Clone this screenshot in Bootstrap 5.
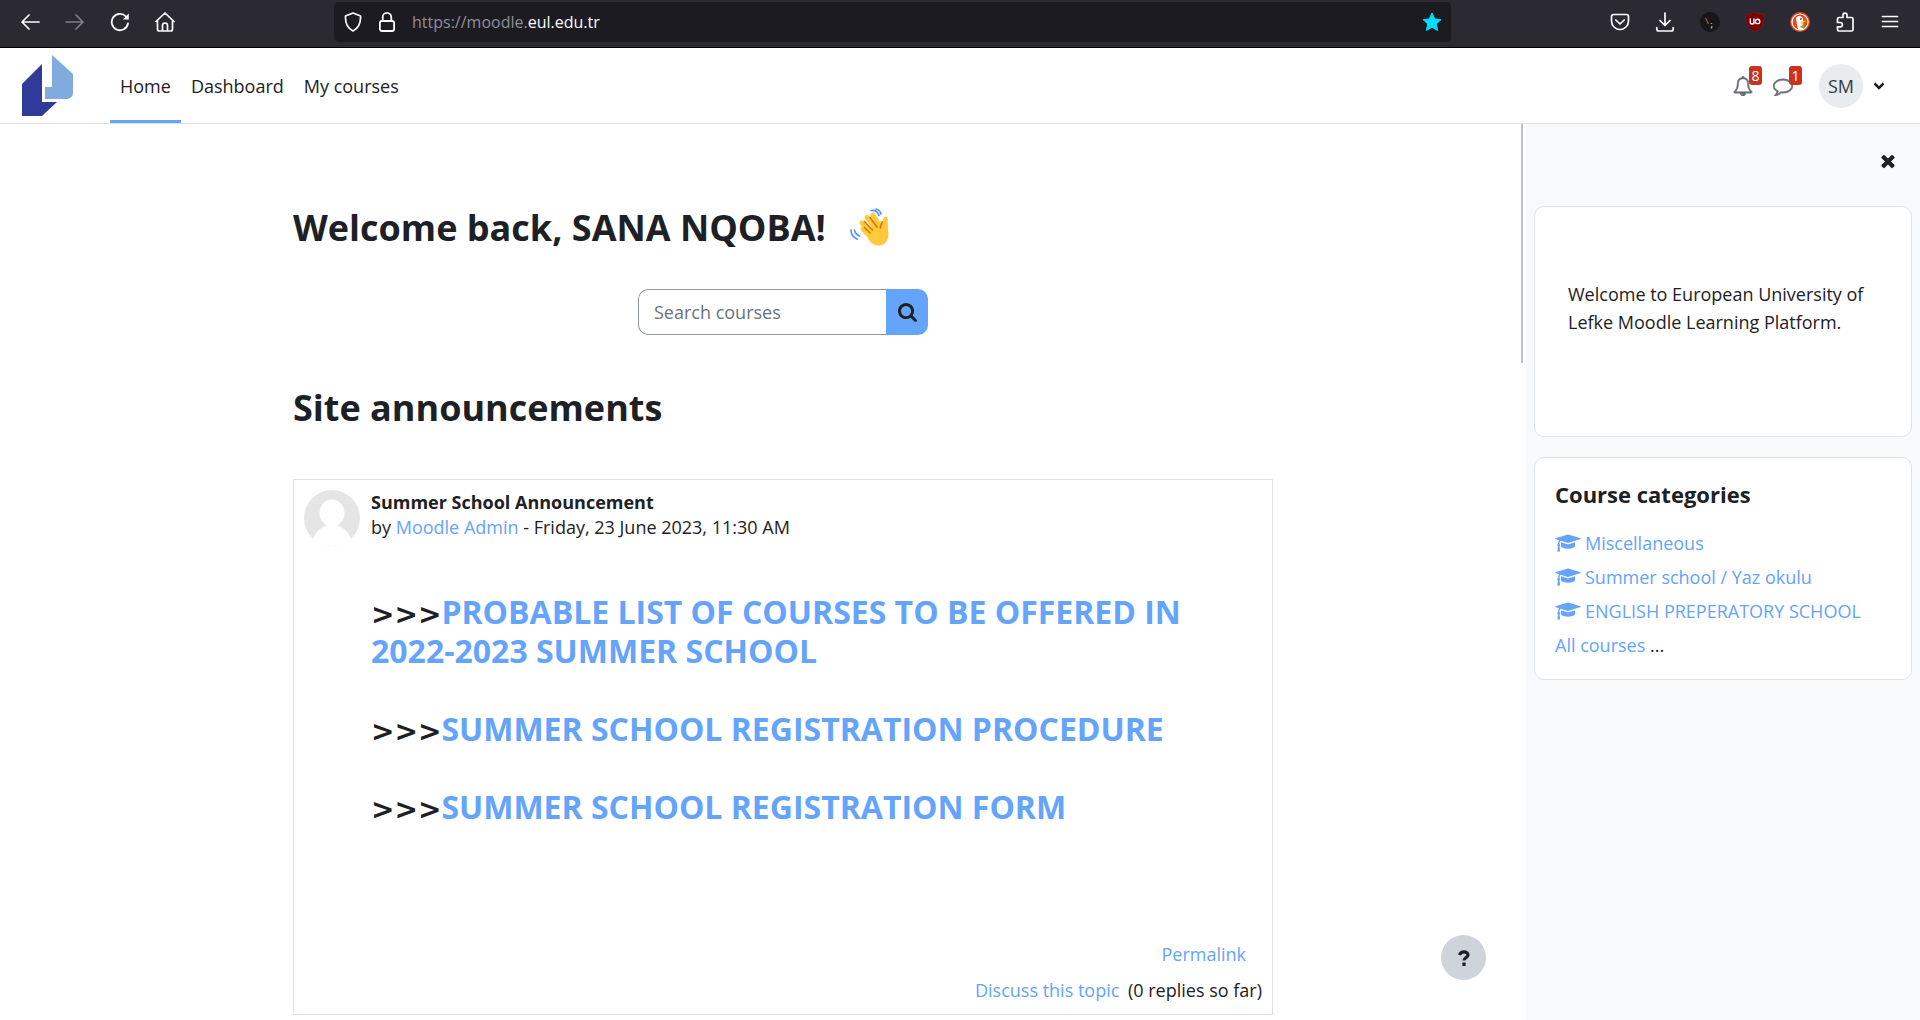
<!DOCTYPE html>
<html lang="en">
<head>
<meta charset="utf-8">
<meta name="viewport" content="width=device-width, initial-scale=1">
<title>Home | EUL Moodle</title>
<link href="https://cdn.jsdelivr.net/npm/bootstrap@5.3.0/dist/css/bootstrap.min.css" rel="stylesheet">
<style>
:root{--accent:#64a4fb;--ink:#1d2125;--line:#dee2e6}
body{font-family:"Open Sans","Noto Sans",sans-serif;font-size:18px;line-height:28px;color:var(--ink);background:#fff}
a{color:var(--accent);text-decoration:none}
a:hover{text-decoration:underline}
svg{display:block;flex:none}
h1,h2,h3,h4{font-weight:700;margin:0}
.browser-bar{height:48px;background:#2b2a33;border-bottom:1px solid #000;padding:2px 20px 5px;color:#fbfbfe}
.browser-bar button{background:none;border:0;padding:0;width:20px;height:20px;color:inherit;display:block}
.side-tools{gap:25px}
.left-tools{width:314px;flex:none}
.btn-off{opacity:.4}
.address{flex:0 1 1117px;height:40px;background:#1c1b22;border-radius:5px;padding:0 9px 0 10px}
.url-dim{color:#8f8f9a}
.url-text{font-size:16px;line-height:24px}
.browser-bar .star-btn{color:#00ddff}
.site-nav{height:76px;border-bottom:1px solid var(--line);padding:0 35px 0 20px}
.site-nav .nav-link{color:var(--ink);padding:0 10px;display:flex;align-items:center}
.site-nav .nav-link.active{box-shadow:inset 0 -3px var(--accent)}
.nav-gap{margin-left:35px}
.nav-tools{gap:20px}
.tool-btn{background:none;border:0;padding:0;color:#6a6f75;position:relative}
.tool-btn svg{stroke:currentColor;stroke-width:50}
.count{position:absolute;top:-10px;left:16px;width:13px;height:19px;border-radius:3px;background:#ca3120;color:#fff;font-size:14px;line-height:19px;text-align:center}
.user-btn{background:none;border:0;padding:0;gap:10px;margin-left:6px}
.initials{width:44px;height:44px;border-radius:50%;background:#e9ecef;color:#343a40;line-height:44px;font-size:18px}
.main-pane{min-width:0;position:relative}
.thumb{position:absolute;right:3px;top:0;width:2px;height:239px;background:#bfc4c9}
.content-col{width:100%;max-width:980px;margin-left:293px;margin-right:24px;padding-top:80px}
.page-title{font-size:36px;line-height:48px}
.hello{gap:24px}
.course-search{width:290px;margin:37px auto 0;height:46px}
.course-search .form-control{border:1px solid #8f959e;border-radius:10px 0 0 10px;font-size:18px;padding:0 15px;border-right:0}
.course-search .form-control::placeholder{color:#6a737b}
.course-search .btn{background:var(--accent);border:0;border-radius:0 10px 10px 0;width:42px;padding:0;color:var(--ink)}
.section-title{margin-top:49px}
.post{border:1px solid var(--line);margin-top:47px;padding:10px}
.post-head{line-height:25px}
.post-head svg{margin-right:11px}
.post-subject{font-size:18px;line-height:25px}
.post-body{padding-left:67px;margin-top:46px}
.post-body h3{font-size:32px;line-height:39px;margin-bottom:39px}
.arrows{font-family:"DejaVu Sans",sans-serif;font-size:28px;line-height:28px}
.post-actions{margin-top:114px}
.help-btn{position:absolute;right:40px;bottom:40px;width:45px;height:45px;border-radius:50%;border:0;background:#ced4da;padding:0;color:var(--ink)}
.drawer{width:394px;flex:none;background:#f8f9fa;padding:0 8px}
.drawer-head{height:82px;padding:0 16px}
.drawer-head button{background:none;border:0;padding:0;color:var(--ink);margin-top:-6px}
.block{border:1px solid var(--line);border-radius:10px;background:#fff;margin-bottom:20px}
.welcome-block{padding:73px 33px 100px}
.welcome-block p{margin:0}
.cat-block{padding:20px 20px 17px}
.cat-block h2{font-size:22px;line-height:32px;margin-bottom:16px}
.cat-block li,.all-line{line-height:34px}
.cat-block li a{display:flex;align-items:center;gap:4px}
</style>
<script src="https://cdn.jsdelivr.net/npm/bootstrap@5.3.0/dist/js/bootstrap.bundle.min.js"></script>
</head>
<body>
<div class="d-flex flex-column vh-100 overflow-hidden">

<div class="browser-bar d-flex flex-shrink-0">
  <div class="side-tools left-tools d-flex align-items-center">
    <button aria-label="Back"><svg width="20" height="20" viewBox="0 0 20 20" fill="none" stroke="currentColor" stroke-width="1.7" stroke-linecap="round" stroke-linejoin="round"><path d="M19 10H2M9 3L2 10l7 7"/></svg></button>
    <button class="btn-off" aria-label="Forward"><svg width="20" height="20" viewBox="0 0 20 20" fill="none" stroke="currentColor" stroke-width="1.7" stroke-linecap="round" stroke-linejoin="round"><path d="M1 10h17M11 3l7 7-7 7"/></svg></button>
    <button aria-label="Reload"><svg width="20" height="20" viewBox="0 0 20 20" fill="none" stroke="currentColor" stroke-width="1.8" stroke-linecap="round"><path d="M18 11.500A8.200 8.200 0 1 1 16 4.500"/><path d="M18.800 1.500v6h-6z" fill="currentColor" stroke="none"/></svg></button>
    <button aria-label="Home page"><svg width="20" height="20" viewBox="0 0 20 20" fill="none" stroke="currentColor" stroke-width="1.700" stroke-linejoin="round" stroke-linecap="round"><path d="M1 9.500L10 1l9 8.500M2.500 8.500V17a2 2 0 0 0 2 2h11a2 2 0 0 0 2-2V8.500M7.500 18.500v-5a2.500 2.500 0 0 1 5 0v5"/></svg></button>
  </div>
  <div class="address d-flex align-items-center">
    <svg width="18" height="20" viewBox="0 0 18 20" fill="none" stroke="currentColor" stroke-width="1.700" stroke-linejoin="round"><path d="M9 1l7.500 3c.4 7-1.500 12-7.500 15C3 16 1.100 11 1.500 4z"/></svg>
    <svg class="ms-3" width="18" height="20" viewBox="0 0 18 20" fill="none" stroke="currentColor" stroke-width="1.800"><rect x="1.900" y="9" width="14.200" height="10" rx="2"/><path d="M4.700 9V5.200a4.300 4.300 0 0 1 8.600 0V9"/></svg>
    <span class="url-text flex-grow-1 ms-3"><span class="url-dim">https://moodle.</span>eul.edu.tr</span>
    <button class="star-btn" aria-label="Bookmark"><svg width="20" height="20" viewBox="0 0 20 20" fill="currentColor" stroke="currentColor" stroke-linejoin="round"><path d="M10 1l2.700 5.900 6.300.7-4.700 4.300 1.300 6.600L10 15.200l-5.600 3.300 1.300-6.600L1 7.600l6.300-.7z"/></svg></button>
  </div>
  <div class="side-tools d-flex flex-grow-1 align-items-center justify-content-end">
    <button aria-label="Pocket"><svg width="20" height="20" viewBox="0 0 20 20" fill="none" stroke="currentColor" stroke-width="1.700" stroke-linecap="round" stroke-linejoin="round"><path d="M3.500 2.500h13a2 2 0 0 1 2 2V9a8.500 8.500 0 0 1-17 0V4.500a2 2 0 0 1 2-2zM5.800 8l4.200 4 4.200-4"/></svg></button>
    <button aria-label="Downloads"><svg width="20" height="20" viewBox="0 0 20 20" fill="none" stroke="currentColor" stroke-width="1.700" stroke-linecap="round" stroke-linejoin="round"><path d="M10 1v12M5 8.500l5 5 5-5M1.800 15.500V17a2 2 0 0 0 2 2h12.400a2 2 0 0 0 2-2v-1.500"/></svg></button>
    <button aria-label="Extension"><svg width="20" height="20" viewBox="0 0 20 20"><circle cx="10" cy="10" r="10" fill="#17171a"/><path d="M5.500 6l3 6" stroke="#a0563c" stroke-width="1.200"/><path d="M11.500 11v1M12 14l-.8 2.500" stroke="#998" stroke-width="1.500"/></svg></button>
    <button aria-label="uBlock"><svg width="20" height="20" viewBox="0 0 20 20"><path d="M10 0c3 1.800 5.500 2.300 9 2.500 0 8.500-.5 13-9 17.500C1.500 15.500 1 11 1 2.500 4.500 2.300 7 1.800 10 0z" fill="#800000" stroke="#603038" stroke-width=".5"/><path d="M5.300 6.500v3.700a1.700 1.700 0 0 0 3.600 0V6.500M8.900 6.500v5.700" fill="none" stroke="#fff" stroke-width="1.400"/><circle cx="12.600" cy="9.400" r="2.200" fill="none" stroke="#fff" stroke-width="1.400"/></svg></button>
    <button aria-label="DuckDuckGo"><svg width="20" height="20" viewBox="0 0 20 20"><circle cx="10" cy="10" r="10" fill="#e8481c"/><circle cx="10" cy="10" r="8" fill="none" stroke="#fff" stroke-width="1.200"/><path d="M8 17.500L6.200 8C5.700 5 8 3.500 10.500 4.300c2.500.8 3.200 3.400 2.500 6.200l-.6 3 1 4c-2 .6-4 .5-5.400 0z" fill="#fff"/><path d="M11 9.500c2-.8 4-1 5-.4-1 1.200-3 1.400-4.500 2.200 1.200.4 2.600.2 3 .8-1.200.8-3.500.8-4-.6z" fill="#fdd20a"/><path d="M10.500 14l4-1v3.600l-4-1z" fill="#65bc46"/><circle cx="10.800" cy="7" r=".9" fill="#2d4f8e"/></svg></button>
    <button aria-label="Extensions"><svg width="20" height="20" viewBox="0 0 20 20" fill="none" stroke="currentColor" stroke-width="1.700" stroke-linejoin="round"><path d="M2.500 10V7a1.500 1.500 0 0 1 1.500-1.500h4V3.200a2 2 0 0 1 4 0v2.300h4.500A1.500 1.500 0 0 1 18 7v10.500a1.500 1.500 0 0 1-1.500 1.500H4a1.500 1.500 0 0 1-1.500-1.500v-2.700h2.700a2.100 2.100 0 0 0 0-4.300H2.500z"/></svg></button>
    <button aria-label="Menu"><svg width="20" height="20" viewBox="0 0 20 20" stroke="currentColor" stroke-width="1.700" stroke-linecap="round"><path d="M2.500 4.500h15M2.500 9.500h15M2.500 14.500h15"/></svg></button>
  </div>
</div>

<nav class="site-nav d-flex flex-shrink-0 align-items-stretch" aria-label="Site navigation">
  <a href="#" class="d-flex align-items-center" aria-label="European University of Lefke"><svg width="55" height="62" viewBox="0 0 55 62"><path d="M2 29L22 9v38h15L22 61H2z" fill="#2f3a9b"/><path d="M32 0l21 19v19c0 3.500-3 6-6.500 6H25V32h7z" fill="#80abdf"/></svg></a>
  <ul class="nav nav-gap flex-nowrap">
    <li class="d-flex"><a class="nav-link active" aria-current="page" href="#">Home</a></li>
    <li class="d-flex"><a class="nav-link" href="#">Dashboard</a></li>
    <li class="d-flex"><a class="nav-link" href="#">My courses</a></li>
  </ul>
  <div class="nav-tools ms-auto d-flex align-items-center">
    <button class="tool-btn" aria-label="Notifications"><svg width="20" height="20" viewBox="0 0 1792 1792" fill="currentColor"><path d="M912 1696q0-16-16-16-59 0-101.500-42.500t-42.500-101.500q0-16-16-16t-16 16q0 73 51.500 124.500t124.500 51.500q16 0 16-16zM246 1408h1300q-266-300-266-832 0-51-24-105t-69-103-121.500-80.500-169.500-31.500-169.500 31.500-121.500 80.500-69 103-24 105q0 532-266 832zM1728 1408q0 52-38 90t-90 38h-448q0 106-75 181t-181 75-181-75-75-181h-448q-52 0-90-38t-38-90q50-42 91-88t85-119.500 74.500-158.500 50-206 19.500-260q0-152 117-282.500t307-158.500q-8-19-8-39 0-40 28-68t68-28 68 28 28 68q0 20-8 39 190 28 307 158.500t117 282.500q0 139 19.500 260t50 206 74.500 158.500 85 119.500 91 88z"/></svg><span class="count">8</span></button>
    <button class="tool-btn" aria-label="Messages"><svg width="20" height="20" viewBox="0 0 1792 1792" fill="currentColor"><path d="M896 384q-204 0-381.500 69.500t-282 187.500-104.500 255q0 112 71.500 213.500t201.500 175.500l87 50-27 96q-24 91-70 172 152-63 275-171l43-38 57 6q69 8 130 8 204 0 381.500-69.500t282-187.500 104.500-255-104.500-255-282-187.500-381.500-69.500zM1792 896q0 174-120 321.500t-326 233-450 85.500q-70 0-145-8-198 175-460 242-49 14-114 22h-5q-15 0-27-10.500t-16-27.500v-1q-3-4-.5-12t2-10 4.500-9.500l6-9 7-8.500 8-9q7-8 31-34.500t34.500-38 31-39.500 32.500-51 27-59 26-76q-157-89-247.500-220t-90.500-281q0-174 120-321.500t326-233 450-85.500 450 85.500 326 233 120 321.500z"/></svg><span class="count">1</span></button>
    <button class="user-btn d-flex align-items-center" aria-label="User menu"><span class="initials">SM</span><svg width="12" height="8" viewBox="0 0 12 8" fill="none" stroke="#1d2125" stroke-width="2.500"><path d="M1.500 1.500L6 6l4.500-4.500"/></svg></button>
  </div>
</nav>

<div class="d-flex flex-grow-1 overflow-hidden">
  <main class="main-pane flex-grow-1 d-flex overflow-hidden">
    <div class="content-col">
      <h1 class="page-title hello d-flex align-items-center"><span>Welcome back, SANA NQOBA!</span>
        <svg width="40" height="40" viewBox="0 0 40 40" role="img" aria-label="Waving hand">
          <g stroke-linecap="round" fill="none">
            <path d="M13 21L21 29M12 15L24 27M17 9.500L28 23M23 7L31 21" stroke="#ffc83d" stroke-width="5"/>
            <path d="M35.500 11v12" stroke="#ffc83d" stroke-width="4.500"/>
            <path d="M16 24L28 14l9-2 1.500 14c0 7-4 11-9 11.500-5 .5-8-2-11-6z" fill="#ffc83d"/>
            <path d="M14.500 19.500l5.500 5.500M14.500 13.500l8 8.500M20 9.500l7 9.500M32.500 14c-.5 2-2.500 3-2 6" stroke="#d67d00" stroke-width="1.700"/>
            <path d="M21 2.500q6-1 8 5M26 1q4 1 5 5M1 22q0 6 6 9M4.500 22q.5 4 5 6" stroke="#5092ff" stroke-width="1.700"/>
          </g>
        </svg>
      </h1>
      <form class="course-search input-group flex-nowrap" role="search">
        <input class="form-control" type="text" placeholder="Search courses" aria-label="Search courses">
        <button class="btn d-flex align-items-center justify-content-center" type="button" aria-label="Search"><svg width="19" height="19" viewBox="0 128 1664 1664" fill="currentColor"><path d="M1152 832q0-185-131.500-316.500t-316.500-131.500-316.500 131.500-131.500 316.500 131.500 316.500 316.500 131.500 316.500-131.500 131.500-316.500zM1664 1664q0 52-38 90t-90 38q-54 0-90-38l-343-342q-179 124-399 124-143 0-273.500-55.500t-225-150-150-225-55.500-273.500 55.500-273.500 150-225 225-150 273.500-55.500 273.500 55.500 225 150 150 225 55.500 273.500q0 220-124 399l343 343q37 37 37 90z"/></svg></button>
      </form>
      <h2 class="page-title section-title">Site announcements</h2>
      <article class="post">
        <div class="post-head d-flex">
          <svg width="56" height="56" viewBox="0 0 56 56" role="img" aria-label="Moodle Admin"><clipPath id="face"><circle cx="28" cy="28" r="28"/></clipPath><g clip-path="url(#face)"><path fill="#e5e5e5" d="M0 0h56v56H0z"/><ellipse cx="28" cy="23" rx="12.500" ry="13.500" fill="#fff"/><path d="M7 56c2-12 9-21 21-21s19 9 21 21z" fill="#fff"/></g></svg>
          <div>
            <h4 class="post-subject">Summer School Announcement</h4>
            <div>by <a href="#">Moodle Admin</a> - Friday, 23 June 2023, 11:30 AM</div>
          </div>
        </div>
        <div class="post-body">
          <h3><span class="arrows">&gt;&gt;&gt;</span><a href="#">PROBABLE LIST OF COURSES TO BE OFFERED IN 2022-2023 SUMMER SCHOOL</a></h3>
          <h3><span class="arrows">&gt;&gt;&gt;</span><a href="#">SUMMER SCHOOL REGISTRATION PROCEDURE</a></h3>
          <h3><span class="arrows">&gt;&gt;&gt;</span><a href="#">SUMMER SCHOOL REGISTRATION FORM</a></h3>
        </div>
        <div class="post-actions text-end"><a class="me-3" href="#">Permalink</a></div>
        <div class="text-end mt-2"><a class="me-1" href="#">Discuss this topic</a> (0 replies so far)</div>
      </article>
    </div>
    <div class="thumb"></div>
    <button class="help-btn d-flex align-items-center justify-content-center" aria-label="Help"><svg width="12" height="16" viewBox="0 0 12 16" fill="none" stroke="currentColor" stroke-width="3.200"><path d="M1.500 5C2.500 2.500 4 1.800 6 1.800c2.200 0 4 1.200 4 3.200C10 7.500 6 7.500 6 10.500M6 12.500V16"/></svg></button>
  </main>

  <aside class="drawer" aria-label="Blocks">
    <div class="drawer-head d-flex align-items-center justify-content-end"><button aria-label="Close block drawer"><svg width="16" height="20" viewBox="0 0 1408 1792" fill="currentColor"><path d="M1298 1214q0 40-28 68l-136 136q-28 28-68 28t-68-28l-294-294-294 294q-28 28-68 28t-68-28l-136-136q-28-28-28-68t28-68l294-294-294-294q-28-28-28-68t28-68l136-136q28-28 68-28t68 28l294 294 294-294q28-28 68-28t68 28l136 136q28 28 28 68t-28 68l-294 294 294 294q28 28 28 68z"/></svg></button></div>
    <section class="block welcome-block"><p>Welcome to European University of Lefke Moodle Learning Platform.</p></section>
    <section class="block cat-block">
      <h2>Course categories</h2>
      <svg class="d-none"><symbol id="cap" viewBox="0 0 2304 1792"><path d="M1774 836l18 316q4 69-82 128t-235 93.500-323 34.500-323-34.500-235-93.500-82-128l18-316 574 181q22 7 48 7t48-7zM2304 512q0 23-22 31l-1120 352q-4 1-10 1t-10-1l-652-206q-43 34-71 111.500t-34 178.500q63 36 63 109 0 69-58 107l58 433q2 14-8 25-9 11-24 11h-192q-15 0-24-11-10-11-8-25l58-433q-58-38-58-107 0-73 65-111 11-207 98-330l-333-104q-22-8-22-31t22-31l1120-352q4-1 10-1t10 1l1120 352q22 8 22 31z"/></symbol></svg>
      <ul class="list-unstyled m-0">
        <li><a href="#"><svg width="26" height="20" fill="currentColor"><use href="#cap"/></svg>Miscellaneous</a></li>
        <li><a href="#"><svg width="26" height="20" fill="currentColor"><use href="#cap"/></svg>Summer school / Yaz okulu</a></li>
        <li><a href="#"><svg width="26" height="20" fill="currentColor"><use href="#cap"/></svg>ENGLISH PREPERATORY SCHOOL</a></li>
      </ul>
      <div class="all-line"><a href="#">All courses</a> ...</div>
    </section>
  </aside>
</div>
</div>
</body>
</html>
